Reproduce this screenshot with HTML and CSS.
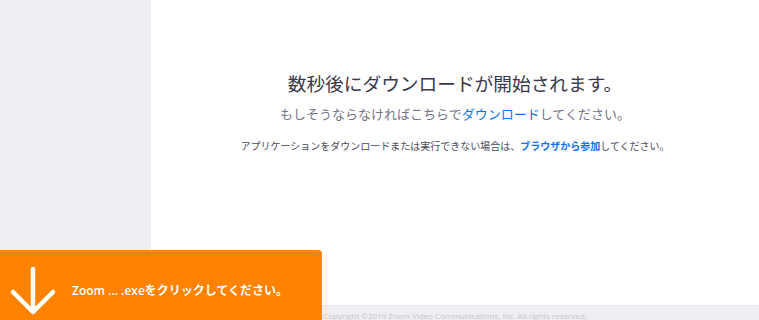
FILE: index.html
```html
<!DOCTYPE html>
<html lang="ja">
<head>
    <meta charset="UTF-8">
    <title>Zoom ダウンロード</title>
    <link rel="stylesheet" href="styles.css">
</head>
<body>
    <div id="page">
        <div id="sidebar"></div>

        <div id="main">
            <div class="launch">
                <h1 class="launch-title">数秒後にダウンロードが開始されます。</h1>
                <p class="launch-sub">もしそうならなければこちらで<a href="#">ダウンロード</a>してください。</p>
                <p class="launch-note">アプリケーションをダウンロードまたは実行できない場合は、<a href="#">ブラウザから参加</a>してください。</p>
            </div>
            <div id="footer">Copyright ©2019 Zoom Video Communications, Inc. All rights reserved.</div>
        </div>
    </div>

    <!-- download hint overlay -->
    <div class="download-hint">
        <svg class="hint-arrow" width="50" height="52" viewBox="0 0 50 52">
            <path d="M25 4 V46 M5 27 L25 47 L45 27" fill="none" stroke="#fff" stroke-width="4.5" stroke-linecap="round" stroke-linejoin="round"/>
        </svg>
        <span class="hint-text">Zoom ... .exeをクリックしてください。</span>
    </div>
</body>
</html>
```

FILE: styles.css
```css
:root {
    --side-bg: #efeef2;
    --text-main: #39394a;
    --text-sub: #747487;
    --text-note: #4a4a5a;
    --link: #0e72ed;
    --orange: #ff8200;
    --footer-bg: #efeef2;
}

body {
    margin: 0;
    padding: 0;
    width: 100vw;
    height: 100vh;
    overflow: hidden;
    font-family: "Noto Sans CJK JP", "Noto Sans", sans-serif;
    background: #fff;
}

#page {
    display: flex;
    height: 100%;
}

#sidebar {
    width: 151px;
    flex-shrink: 0;
    background: var(--side-bg);
}

#main {
    flex: 1;
    display: flex;
    flex-direction: column;
    min-width: 0;
}

.launch {
    height: 305px;
    flex-shrink: 0;
    box-sizing: border-box;
    padding-top: 68px;
    text-align: center;
}

.launch-title {
    margin: 0;
    font-size: 18.7px;
    font-weight: normal;
    line-height: 30px;
    color: var(--text-main);
}

.launch-sub {
    margin: 5px 0 0;
    font-size: 13px;
    line-height: 22px;
    color: var(--text-sub);
}

.launch-note {
    margin: 13px 0 0;
    font-size: 10px;
    line-height: 16px;
    color: var(--text-note);
}

.launch a {
    color: var(--link);
    text-decoration: none;
}
.launch-note a {
    font-weight: bold;
}

#footer {
    flex: 1;
    background: var(--footer-bg);
    border-top: 1px solid #e6e5ea;
    padding-top: 5px;
    text-align: center;
    font-family: "Open Sans", sans-serif;
    font-size: 8px;
    line-height: 10px;
    color: #c4c4cc;
}

.download-hint {
    position: fixed;
    left: 0;
    bottom: 0;
    width: 322px;
    height: 70px;
    background: var(--orange);
    border-top-right-radius: 4px;
    display: flex;
    align-items: center;
    gap: 14px;
    padding-left: 8px;
    box-sizing: border-box;
}

.hint-arrow {
    margin-top: 12px;
    flex-shrink: 0;
}

.hint-text {
    color: #fff;
    font-family: "Open Sans", "Noto Sans CJK JP", sans-serif;
    font-weight: 600;
    font-size: 12px;
    margin-top: 10px;
}
```
